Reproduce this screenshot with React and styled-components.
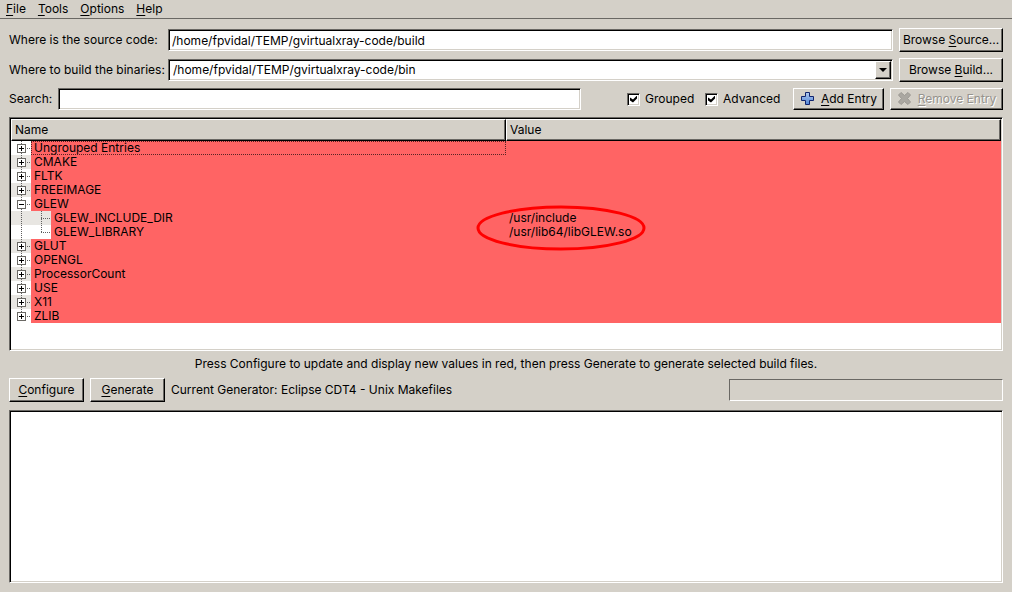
import React from 'react';
import styled, { createGlobalStyle, css } from 'styled-components';

const face = '#d4d0c8';
const shade = '#6a6864';
const red = '#ff6464';

const GlobalStyle = createGlobalStyle`
  * { box-sizing: border-box; }
  html, body, #root { height: 100%; }
  body {
    margin: 0;
    background: ${face};
    color: #000;
    font: 12px/14px Inter, "Liberation Sans", Arial, sans-serif;
  }
  button, input, textarea { font: inherit; color: inherit; border-radius: 0; margin: 0; }
`;

const raised = css`
  border: 1px solid;
  border-color: #fff #000 #000 #fff;
  box-shadow: inset -1px -1px ${shade};
`;

const sunken = css`
  border: 1px solid;
  border-color: ${shade} #fff #fff ${shade};
  box-shadow: inset 1px 1px #000, inset -1px -1px ${face};
  background: #fff;
`;

const Window = styled.div`
  min-height: 100%;
  display: flex;
  flex-direction: column;
`;

const MenuBar = styled.nav`
  display: flex;
  gap: 12px;
  height: 19px;
  padding: 2px 6px;
  border-bottom: 1px solid ${shade};
`;

const MenuItem = styled.button`
  padding: 0;
  border: 0;
  background: none;
  line-height: 14px;
`;

const Mnemonic = styled.span`
  text-decoration: underline;
  text-underline-offset: 2px;
  text-decoration-skip-ink: none;
`;

const Main = styled.main`
  flex: 1;
  display: flex;
  flex-direction: column;
  padding: 9px;
`;

const PathGrid = styled.div`
  display: grid;
  grid-template-columns: 153px 1fr 104px;
  grid-auto-rows: 24px;
  gap: 6px;
  align-items: center;
  white-space: nowrap;
`;

const Field = styled.input`
  ${sunken}
  min-width: 0;
  width: 100%;
  height: 22px;
  padding: 0 3px;
  outline: 0;
`;

const Combo = styled.div`
  ${sunken}
  display: flex;
  height: 22px;
  padding: 1px;
`;

const ComboInput = styled.input`
  flex: 1;
  min-width: 0;
  padding: 0 3px;
  border: 0;
  background: none;
  outline: 0;
`;

const ComboArrow = styled.button`
  ${raised}
  display: grid;
  place-items: center;
  width: 16px;
  padding: 0;
  background: ${face};
`;

const Button = styled.button`
  ${raised}
  display: flex;
  align-items: center;
  justify-content: center;
  gap: 6px;
  width: ${(p) => p.$width};
  height: ${(p) => p.$height || '24px'};
  padding: 0 0 1px;
  background: ${face};
  white-space: nowrap;
  &:disabled {
    color: #96938d;
    text-shadow: 1px 1px #fff;
  }
`;

const SearchRow = styled.div`
  display: flex;
  align-items: center;
  gap: 6px;
  margin-top: 6px;
`;

const SearchLabel = styled.label`
  width: 43px;
`;

const SearchBox = styled.div`
  flex: 1;
  padding-right: 40px;
`;

const CheckLabel = styled.label`
  display: flex;
  align-items: center;
  gap: 5px;
  width: 72px;
  &:last-of-type { width: 82px; }
`;

const Check = styled.input`
  ${sunken}
  appearance: none;
  width: 13px;
  height: 13px;
  display: grid;
  place-items: center;
  &:checked::before {
    content: '';
    width: 7px;
    height: 7px;
    background: #000;
    clip-path: polygon(0 29%, 43% 57%, 100% 0, 100% 43%, 43% 100%, 0 71%);
  }
`;

const Tree = styled.section`
  ${sunken}
  height: 234px;
  margin-top: 7px;
  padding: 1px;
`;

const Table = styled.table`
  width: 100%;
  border-collapse: separate;
  border-spacing: 0;
  table-layout: fixed;
`;

const HeadCell = styled.th`
  ${raised}
  width: ${(p) => p.$width};
  height: 22px;
  padding: 0 3px;
  background: ${face};
  font-weight: normal;
  text-align: left;
`;

const Row = styled.tr`
  height: 14px;
  background: ${(p) => (p.$alt ? '#e8e6e2' : '#fff')};
`;

const NameCell = styled.td`
  padding: 0;
`;

const NameLine = styled.div`
  display: flex;
  height: 14px;
`;

const NameText = styled.span`
  flex: 1;
  padding-left: 3px;
  background: ${red};
  line-height: 14px;
  outline: ${(p) => (p.$focused ? '1px dotted #5a2323' : '0')};
  outline-offset: -1px;
`;

const ValueCell = styled.td`
  position: relative;
  z-index: ${(p) => (p.$marked ? 1 : 0)};
  padding: 0 3px;
  background: ${red};
`;

const Highlight = styled.svg`
  position: absolute;
  left: -30px;
  top: -6px;
  pointer-events: none;
`;

const Hint = styled.p`
  margin: 6px 0 7px;
  text-align: center;
`;

const ActionRow = styled.div`
  display: flex;
  align-items: center;
  gap: 6px;
`;

const Generator = styled.span`
  flex: 1;
`;

const Progress = styled.div`
  width: 274px;
  height: 22px;
  border: 1px solid;
  border-color: ${shade} #fff #fff ${shade};
`;

const Output = styled.textarea`
  ${sunken}
  flex: 1;
  width: 100%;
  margin-top: 8px;
  resize: none;
  outline: 0;
`;

const Mn = ({ text, at = 0 }) => (
  <span>
    {text.slice(0, at)}
    <Mnemonic>{text[at]}</Mnemonic>
    {text.slice(at + 1)}
  </span>
);

const PlusIcon = () => (
  <svg width="15" height="15" viewBox="0 0 15 15" aria-hidden="true">
    <defs>
      <linearGradient id="plus" x1="0" y1="0" x2="0" y2="1">
        <stop offset="0" stopColor="#b4ccee" />
        <stop offset="1" stopColor="#4f83d6" />
      </linearGradient>
    </defs>
    <path d="M5.5 1.5h4v4h4v4h-4v4h-4v-4h-4v-4h4z" fill="url(#plus)" stroke="#10246e" strokeLinejoin="round" />
  </svg>
);

const CrossIcon = () => (
  <svg width="15" height="15" viewBox="0 0 15 15" aria-hidden="true">
    <path
      d="M4 1.5L7.5 4.5L11 1.5L13.5 4L10.5 7.5L13.5 11L11 13.5L7.5 10.5L4 13.5L1.5 11L4.5 7.5L1.5 4z"
      fill="#aaa7a1"
      stroke="#9c9993"
      strokeLinejoin="round"
    />
  </svg>
);

const Branch = ({ depth, open, last }) => {
  const dots = { stroke: '#606060', strokeDasharray: '1 1' };
  return (
    <svg width={depth ? 40 : 20} height="14" shapeRendering="crispEdges" aria-hidden="true">
      <path d={last && !depth ? 'M10.5 0V8' : 'M10.5 0V14'} {...dots} />
      {depth ? (
        <path d={last ? 'M30.5 0V7M30 7.5H40' : 'M30.5 0V14M30 7.5H40'} {...dots} />
      ) : (
        <>
          <path d="M16 7.5H20" {...dots} />
          <rect x="6.5" y="3.5" width="8" height="8" fill="#fff" stroke={shade} />
          <path d={open ? 'M8 7.5H13' : 'M8 7.5H13M10.5 5V10'} stroke="#000" />
        </>
      )}
    </svg>
  );
};

const entries = [
  { name: 'Ungrouped Entries', focused: true },
  { name: 'CMAKE' },
  { name: 'FLTK' },
  { name: 'FREEIMAGE' },
  { name: 'GLEW', open: true },
  { name: 'GLEW_INCLUDE_DIR', depth: 1, value: '/usr/include', marked: true },
  { name: 'GLEW_LIBRARY', depth: 1, last: true, value: '/usr/lib64/libGLEW.so' },
  { name: 'GLUT' },
  { name: 'OPENGL' },
  { name: 'ProcessorCount' },
  { name: 'USE' },
  { name: 'X11' },
  { name: 'ZLIB', last: true },
];

export default function App() {
  return (
    <Window>
      <GlobalStyle />
      <MenuBar>
        {['File', 'Tools', 'Options', 'Help'].map((m) => (
          <MenuItem key={m}><Mn text={m} /></MenuItem>
        ))}
      </MenuBar>
      <Main>
        <PathGrid>
          <label htmlFor="source">Where is the source code:</label>
          <Field id="source" defaultValue="/home/fpvidal/TEMP/gvirtualxray-code/build" />
          <Button><Mn text="Browse Source..." at={7} /></Button>
          <label htmlFor="binaries">Where to build the binaries:</label>
          <Combo>
            <ComboInput id="binaries" defaultValue="/home/fpvidal/TEMP/gvirtualxray-code/bin" />
            <ComboArrow aria-label="Show recent build folders">
              <svg width="8" height="4" aria-hidden="true"><path d="M0 0H8L4 4z" /></svg>
            </ComboArrow>
          </Combo>
          <Button><Mn text="Browse Build..." at={7} /></Button>
        </PathGrid>
        <SearchRow>
          <SearchLabel htmlFor="search">Search:</SearchLabel>
          <SearchBox><Field id="search" /></SearchBox>
          <CheckLabel><Check type="checkbox" defaultChecked />Grouped</CheckLabel>
          <CheckLabel><Check type="checkbox" defaultChecked />Advanced</CheckLabel>
          <Button $width="91px" $height="22px"><PlusIcon /><Mn text="Add Entry" /></Button>
          <Button $width="113px" $height="22px" disabled><CrossIcon /><Mn text="Remove Entry" /></Button>
        </SearchRow>
        <Tree>
          <Table>
            <thead>
              <tr><HeadCell $width="50%">Name</HeadCell><HeadCell>Value</HeadCell></tr>
            </thead>
            <tbody>
              {entries.map((e, i) => (
                <Row key={e.name} $alt={i % 2 === 1}>
                  <NameCell>
                    <NameLine>
                      <Branch depth={e.depth} open={e.open} last={e.last} />
                      <NameText $focused={e.focused}>{e.name}</NameText>
                    </NameLine>
                  </NameCell>
                  <ValueCell $marked={e.marked}>
                    {e.value}
                    {e.marked && (
                      <Highlight width="170" height="46" aria-hidden="true">
                        <ellipse cx="85" cy="23" rx="83" ry="21" fill="none" stroke="#f00" strokeWidth="3" />
                      </Highlight>
                    )}
                  </ValueCell>
                </Row>
              ))}
            </tbody>
          </Table>
        </Tree>
        <Hint>Press Configure to update and display new values in red, then press Generate to generate selected build files.</Hint>
        <ActionRow>
          <Button $width="75px"><Mn text="Configure" /></Button>
          <Button $width="75px"><Mn text="Generate" /></Button>
          <Generator>Current Generator: Eclipse CDT4 - Unix Makefiles</Generator>
          <Progress role="progressbar" aria-label="Progress" />
        </ActionRow>
        <Output aria-label="Output" readOnly />
      </Main>
    </Window>
  );
}
